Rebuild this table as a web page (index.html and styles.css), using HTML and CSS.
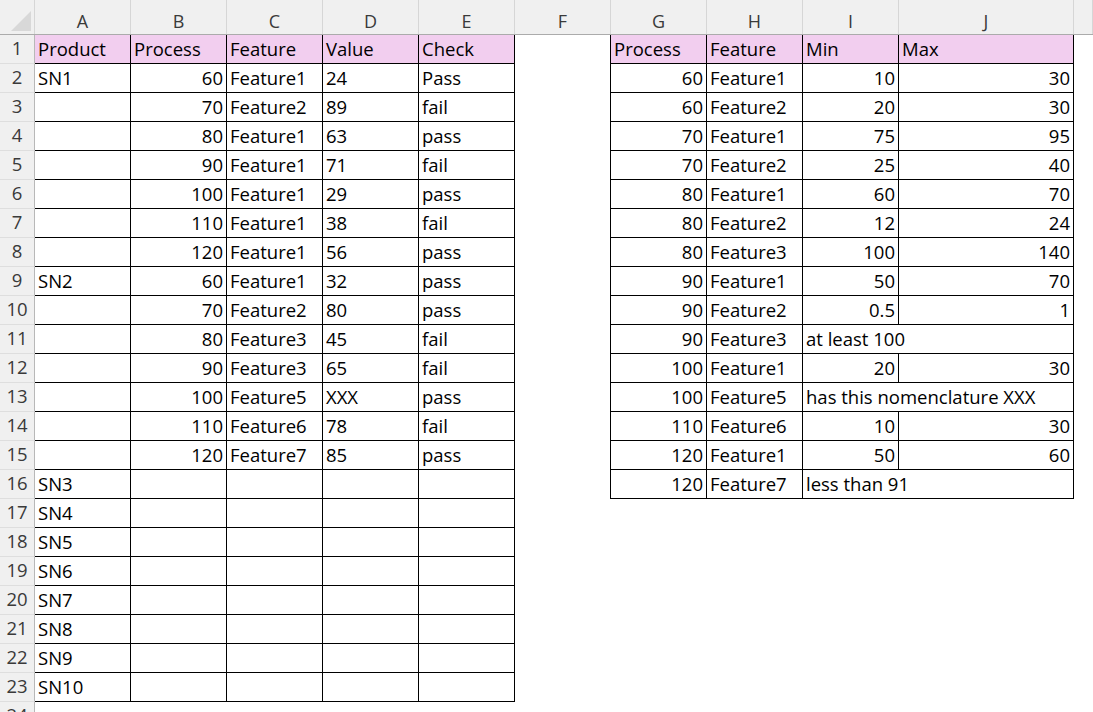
FILE: index.html
```html
<!DOCTYPE html>
<html>
<head>
<meta charset="utf-8">
<link rel="stylesheet" href="styles.css">
</head>
<body>
<div class="sheet">
  <div class="row head">
    <div class="corner"><span class="tri"></span></div>
    <div class="ch">A</div><div class="ch">B</div><div class="ch">C</div><div class="ch">D</div><div class="ch">E</div>
    <div class="ch">F</div><div class="ch">G</div><div class="ch">H</div><div class="ch">I</div><div class="ch">J</div><div class="ch last"></div>
  </div>

  <div class="row">
    <div class="rh">1</div>
    <div class="c b p">Product</div><div class="c b p">Process</div><div class="c b p">Feature</div><div class="c b p">Value</div><div class="c b p">Check</div>
    <div class="c edge"></div>
    <div class="c b p">Process</div><div class="c b p">Feature</div><div class="c b p">Min</div><div class="c b p">Max</div>
  </div>

  <div class="row">
    <div class="rh">2</div>
    <div class="c b">SN1</div><div class="c b r">60</div><div class="c b">Feature1</div><div class="c b">24</div><div class="c b">Pass</div>
    <div class="c edge"></div>
    <div class="c b r">60</div><div class="c b">Feature1</div><div class="c b r">10</div><div class="c b r">30</div>
  </div>
  <div class="row">
    <div class="rh">3</div>
    <div class="c b"></div><div class="c b r">70</div><div class="c b">Feature2</div><div class="c b">89</div><div class="c b">fail</div>
    <div class="c edge"></div>
    <div class="c b r">60</div><div class="c b">Feature2</div><div class="c b r">20</div><div class="c b r">30</div>
  </div>
  <div class="row">
    <div class="rh">4</div>
    <div class="c b"></div><div class="c b r">80</div><div class="c b">Feature1</div><div class="c b">63</div><div class="c b">pass</div>
    <div class="c edge"></div>
    <div class="c b r">70</div><div class="c b">Feature1</div><div class="c b r">75</div><div class="c b r">95</div>
  </div>
  <div class="row">
    <div class="rh">5</div>
    <div class="c b"></div><div class="c b r">90</div><div class="c b">Feature1</div><div class="c b">71</div><div class="c b">fail</div>
    <div class="c edge"></div>
    <div class="c b r">70</div><div class="c b">Feature2</div><div class="c b r">25</div><div class="c b r">40</div>
  </div>
  <div class="row">
    <div class="rh">6</div>
    <div class="c b"></div><div class="c b r">100</div><div class="c b">Feature1</div><div class="c b">29</div><div class="c b">pass</div>
    <div class="c edge"></div>
    <div class="c b r">80</div><div class="c b">Feature1</div><div class="c b r">60</div><div class="c b r">70</div>
  </div>
  <div class="row">
    <div class="rh">7</div>
    <div class="c b"></div><div class="c b r">110</div><div class="c b">Feature1</div><div class="c b">38</div><div class="c b">fail</div>
    <div class="c edge"></div>
    <div class="c b r">80</div><div class="c b">Feature2</div><div class="c b r">12</div><div class="c b r">24</div>
  </div>
  <div class="row">
    <div class="rh">8</div>
    <div class="c b"></div><div class="c b r">120</div><div class="c b">Feature1</div><div class="c b">56</div><div class="c b">pass</div>
    <div class="c edge"></div>
    <div class="c b r">80</div><div class="c b">Feature3</div><div class="c b r">100</div><div class="c b r">140</div>
  </div>
  <div class="row">
    <div class="rh">9</div>
    <div class="c b">SN2</div><div class="c b r">60</div><div class="c b">Feature1</div><div class="c b">32</div><div class="c b">pass</div>
    <div class="c edge"></div>
    <div class="c b r">90</div><div class="c b">Feature1</div><div class="c b r">50</div><div class="c b r">70</div>
  </div>
  <div class="row">
    <div class="rh">10</div>
    <div class="c b"></div><div class="c b r">70</div><div class="c b">Feature2</div><div class="c b">80</div><div class="c b">pass</div>
    <div class="c edge"></div>
    <div class="c b r">90</div><div class="c b">Feature2</div><div class="c b r">0.5</div><div class="c b r">1</div>
  </div>
  <div class="row">
    <div class="rh">11</div>
    <div class="c b"></div><div class="c b r">80</div><div class="c b">Feature3</div><div class="c b">45</div><div class="c b">fail</div>
    <div class="c edge"></div>
    <div class="c b r">90</div><div class="c b">Feature3</div><div class="c b m">at least 100</div>
  </div>
  <div class="row">
    <div class="rh">12</div>
    <div class="c b"></div><div class="c b r">90</div><div class="c b">Feature3</div><div class="c b">65</div><div class="c b">fail</div>
    <div class="c edge"></div>
    <div class="c b r">100</div><div class="c b">Feature1</div><div class="c b r">20</div><div class="c b r">30</div>
  </div>
  <div class="row">
    <div class="rh">13</div>
    <div class="c b"></div><div class="c b r">100</div><div class="c b">Feature5</div><div class="c b">XXX</div><div class="c b">pass</div>
    <div class="c edge"></div>
    <div class="c b r">100</div><div class="c b">Feature5</div><div class="c b m">has this nomenclature XXX</div>
  </div>
  <div class="row">
    <div class="rh">14</div>
    <div class="c b"></div><div class="c b r">110</div><div class="c b">Feature6</div><div class="c b">78</div><div class="c b">fail</div>
    <div class="c edge"></div>
    <div class="c b r">110</div><div class="c b">Feature6</div><div class="c b r">10</div><div class="c b r">30</div>
  </div>
  <div class="row">
    <div class="rh">15</div>
    <div class="c b"></div><div class="c b r">120</div><div class="c b">Feature7</div><div class="c b">85</div><div class="c b">pass</div>
    <div class="c edge"></div>
    <div class="c b r">120</div><div class="c b">Feature1</div><div class="c b r">50</div><div class="c b r">60</div>
  </div>
  <div class="row">
    <div class="rh">16</div>
    <div class="c b">SN3</div><div class="c b"></div><div class="c b"></div><div class="c b"></div><div class="c b"></div>
    <div class="c edge"></div>
    <div class="c b r">120</div><div class="c b">Feature7</div><div class="c b m">less than 91</div>
  </div>
  <div class="row">
    <div class="rh">17</div>
    <div class="c b">SN4</div><div class="c b"></div><div class="c b"></div><div class="c b"></div><div class="c b"></div>
  </div>
  <div class="row">
    <div class="rh">18</div>
    <div class="c b">SN5</div><div class="c b"></div><div class="c b"></div><div class="c b"></div><div class="c b"></div>
  </div>
  <div class="row">
    <div class="rh">19</div>
    <div class="c b">SN6</div><div class="c b"></div><div class="c b"></div><div class="c b"></div><div class="c b"></div>
  </div>
  <div class="row">
    <div class="rh">20</div>
    <div class="c b">SN7</div><div class="c b"></div><div class="c b"></div><div class="c b"></div><div class="c b"></div>
  </div>
  <div class="row">
    <div class="rh">21</div>
    <div class="c b">SN8</div><div class="c b"></div><div class="c b"></div><div class="c b"></div><div class="c b"></div>
  </div>
  <div class="row">
    <div class="rh">22</div>
    <div class="c b">SN9</div><div class="c b"></div><div class="c b"></div><div class="c b"></div><div class="c b"></div>
  </div>
  <div class="row">
    <div class="rh">23</div>
    <div class="c b">SN10</div><div class="c b"></div><div class="c b"></div><div class="c b"></div><div class="c b"></div>
  </div>
  <div class="row">
    <div class="rh">24</div>
  </div>
</div>
</body>
</html>
```

FILE: styles.css
```css
html, body {
  margin: 0;
  padding: 0;
  background: #ffffff;
}

.sheet {
  width: 1093px;
  height: 712px;
  overflow: hidden;
  font-family: "Open Sans", "Liberation Sans", Arial, sans-serif;
  font-size: 18.5px;
  color: #000000;
}

.row {
  display: grid;
  grid-template-columns: 35px repeat(9, 96px) 175px 1fr;
  height: 29px;
}

.row.head {
  height: 35px;
  background: #f0f0f0;
  border-bottom: 1px solid #ababab;
  box-sizing: border-box;
}

.corner {
  position: relative;
  border-right: 1px solid #d6d6d6;
}

.tri {
  position: absolute;
  right: 3px;
  bottom: 3px;
  width: 0;
  height: 0;
  border-left: 20px solid transparent;
  border-bottom: 20px solid #d8d8d8;
}

.ch {
  box-sizing: border-box;
  border-right: 1px solid #d6d6d6;
  display: flex;
  align-items: flex-end;
  justify-content: center;
  padding-bottom: 3px;
  line-height: 20px;
  color: #3a3a3a;
  font-size: 18px;
}

.rh {
  box-sizing: border-box;
  background: #f0f0f0;
  border-right: 1px solid #b8b8b8;
  border-bottom: 1px solid #dedede;
  display: flex;
  align-items: flex-end;
  justify-content: center;
  padding-bottom: 5px;
  line-height: 20px;
  color: #3a3a3a;
}

.c {
  box-sizing: border-box;
  display: flex;
  align-items: flex-end;
  padding: 0 3px 4px 3px;
  line-height: 20px;
  white-space: nowrap;
  overflow: visible;
}

.b {
  border-right: 1px solid #000000;
  border-bottom: 1px solid #000000;
}

.edge {
  border-right: 1px solid #000000;
}

.p {
  background: #f2ceef;
}

.r {
  justify-content: flex-end;
}

.m {
  grid-column: span 2;
}
```
